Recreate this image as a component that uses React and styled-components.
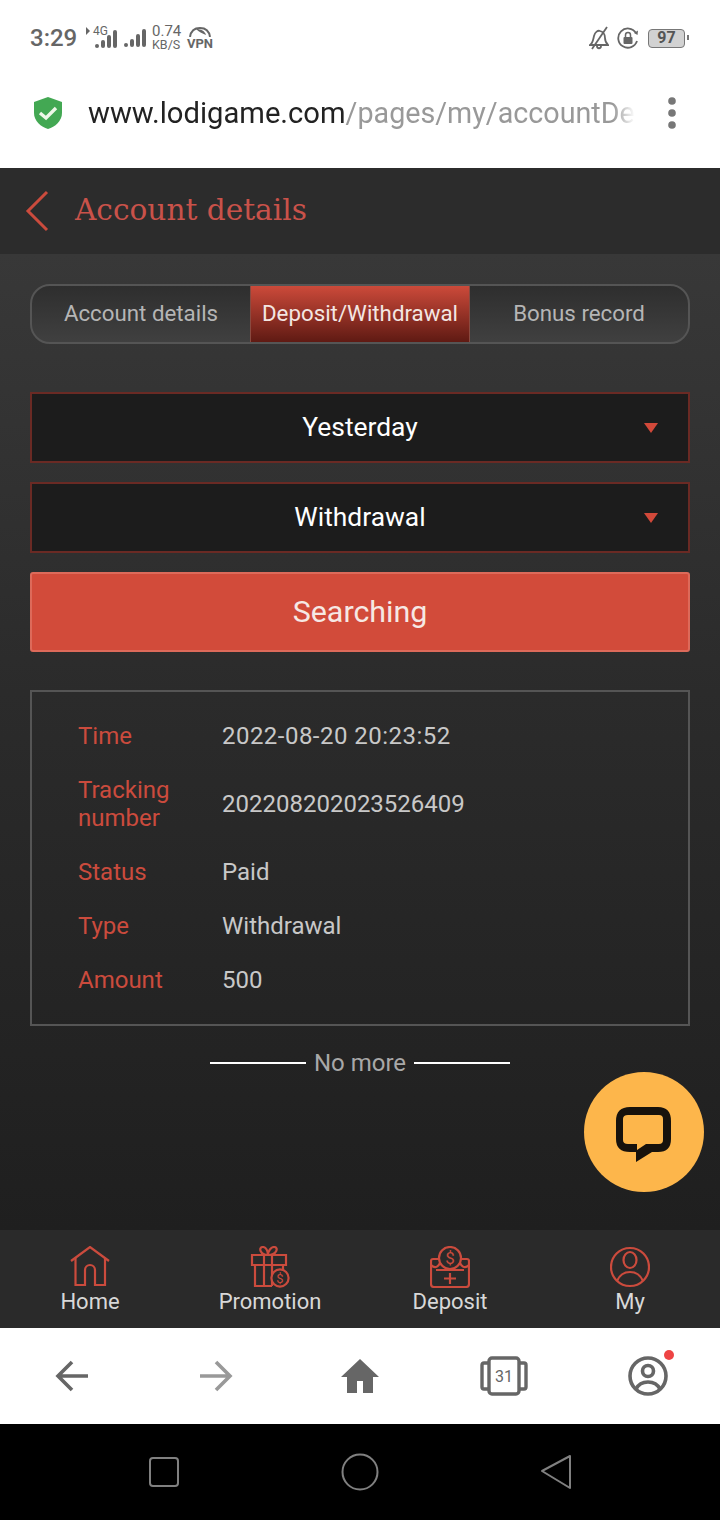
import React from 'react'
import styled, { createGlobalStyle } from 'styled-components'

const GlobalStyle = createGlobalStyle`
  html, body { margin: 0; padding: 0; background: #000; }
  * { box-sizing: border-box; }
`

const RED = '#cb4b3d'

const tabs = ['Account details', 'Deposit/Withdrawal', 'Bonus record']

const records = [
  ['Time', '2022-08-20 20:23:52'],
  ['Tracking number', '202208202023526409'],
  ['Status', 'Paid'],
  ['Type', 'Withdrawal'],
  ['Amount', '500'],
]

const Signal = () => (
  <svg width="22" height="18" viewBox="0 0 22 18" fill="#666">
    <rect x="0" y="14" width="4" height="4" rx="2" />
    <rect x="6" y="10" width="4" height="8" rx="2" />
    <rect x="12" y="5" width="4" height="13" rx="2" />
    <rect x="18" y="0" width="4" height="18" rx="2" />
  </svg>
)

const HomeIcon = () => (
  <svg width="40" height="42" viewBox="0 0 40 42" fill="none" stroke={RED} strokeWidth="2.2">
    <path d="M1 15 L20 1 L39 15" />
    <path d="M5.5 12 V39 H15 V24 a5 5 0 0 1 10 0 V39 H35 V12" />
  </svg>
)

const GiftIcon = () => (
  <svg width="40" height="42" viewBox="0 0 40 42" fill="none" stroke={RED} strokeWidth="2.2">
    <path d="M18 9 C10 9 8 1 13 1 C16 1 18 5 18 9 C18 5 21 1 24 1 C29 1 27 9 18 9" />
    <path d="M2 9 H36 V19 H2 Z" />
    <path d="M5 19 V40 H22 M33 19 V24 M14 9 V40 M22 9 V40" />
    <circle cx="30" cy="32" r="8.6" fill="#2a2a2a" />
    <text x="30" y="37" fontFamily="Roboto, sans-serif" fontSize="13" fill={RED} stroke="none" textAnchor="middle">$</text>
  </svg>
)

const DepositIcon = () => (
  <svg width="40" height="42" viewBox="0 0 40 42" fill="none" stroke={RED} strokeWidth="2.2">
    <circle cx="20" cy="12" r="11" />
    <text x="20" y="18" fontFamily="Roboto, sans-serif" fontSize="17" fill={RED} stroke="none" textAnchor="middle">$</text>
    <path d="M9 13 H3 Q1 13 1 15 V38 Q1 41 4 41 H36 Q39 41 39 38 V15 Q39 13 37 13 H31" />
    <path d="M1 19 C6 24 9 19 10 17 M39 19 C34 24 31 19 30 17 M6 24 H34" />
    <path d="M20 27 V38 M14 32.5 H26" />
  </svg>
)

const MyIcon = () => (
  <svg width="40" height="42" viewBox="0 0 40 42" fill="none" stroke={RED} strokeWidth="2.2">
    <circle cx="20" cy="21" r="19" />
    <ellipse cx="20" cy="14" rx="6.5" ry="8" />
    <path d="M7 35 C10 28 15 26 20 26 C25 26 30 28 33 35" />
  </svg>
)

const navItems = [
  ['Home', HomeIcon],
  ['Promotion', GiftIcon],
  ['Deposit', DepositIcon],
  ['My', MyIcon],
]

const App = () => (
  <Screen>
    <GlobalStyle />
    <StatusBar>
      <Clock>3:29</Clock>
      <Network>
        <svg width="4" height="8" viewBox="0 0 4 8" fill="#666">
          <path d="M0 0 L4 4 L0 8 Z" />
        </svg>
        <Small>4G</Small>
        <Signal />
      </Network>
      <Signal />
      <Speed>
        <span>0.74</span>
        <span>KB/S</span>
      </Speed>
      <Vpn>
        <svg width="24" height="10" viewBox="0 0 24 10" fill="none">
          <path d="M2 10 C3 3 8 1 12 1 C16 1 21 3 22 10" stroke="#666" strokeWidth="2" />
          <path d="M8 2 C13 2 17 4 18 8 C14 6 11 5 8 2" fill="#666" />
        </svg>
        <span>VPN</span>
      </Vpn>
      <StatusRight>
        <svg width="20" height="24" viewBox="0 0 20 24" fill="none" stroke="#666" strokeWidth="1.8">
          <path d="M1 19 C4 17 4 14 5 10 C6 6 9 4 11 5 C15 6 16 9 16 12 C16 15 17 17 19 19 Z" />
          <path d="M18 1 L3 23" />
          <path d="M8 20 C8 23 12 23 12 20" />
        </svg>
        <svg width="22" height="22" viewBox="0 0 22 22" fill="none">
          <path d="M20 14 A9.6 9.6 0 1 1 19 6" stroke="#666" strokeWidth="1.8" />
          <path d="M20.5 8 L17 6 L21 3.5 Z" fill="#666" />
          <rect x="6.5" y="10" width="9" height="7" rx="1" fill="#666" />
          <path d="M8.5 10 V8 a2.5 2.5 0 0 1 5 0 V10" stroke="#666" strokeWidth="1.5" />
        </svg>
        <Battery>97</Battery>
      </StatusRight>
    </StatusBar>

    <AddressBar>
      <svg width="28" height="32" viewBox="0 0 28 32">
        <path d="M14 0 L28 5 V16 C28 24 21 30 14 32 C7 30 0 24 0 16 V5 Z" fill="#43a853" />
        <path d="M6 16 L12 21 L22 11" fill="none" stroke="#eef7e8" strokeWidth="3.4" />
      </svg>
      <Url>
        www.lodigame.com<UrlPath>/pages/my/accountDe</UrlPath>
      </Url>
      <svg width="14" height="38" viewBox="0 0 14 38" fill="#777">
        <circle cx="7" cy="7" r="3.8" />
        <circle cx="7" cy="19" r="3.8" />
        <circle cx="7" cy="31" r="3.8" />
      </svg>
    </AddressBar>

    <AppHeader>
      <svg width="24" height="42" viewBox="0 0 24 42" fill="none" stroke={RED} strokeWidth="3">
        <path d="M22 2 L3 21 L22 40" />
      </svg>
      <Title>Account details</Title>
    </AppHeader>

    <Content>
      <Tabs>
        {tabs.map((t, i) => (
          <Tab key={t} $active={i === 1}>{t}</Tab>
        ))}
      </Tabs>

      <Select>
        <span />
        <span>Yesterday</span>
        <Caret />
      </Select>
      <Select>
        <span />
        <span>Withdrawal</span>
        <Caret />
      </Select>
      <SearchButton>Searching</SearchButton>

      <Card>
        {records.map(([k, v]) => (
          <Row key={k}>
            <Label>{k}</Label>
            <Value $date={k === 'Time'}>{v}</Value>
          </Row>
        ))}
      </Card>

      <NoMore>
        <Line />
        <span>No more</span>
        <Line />
      </NoMore>

      <ChatButton>
        <svg width="56" height="56" viewBox="0 0 56 56">
          <path
            fillRule="evenodd"
            fill="#17120c"
            d="M14 0 H42 Q55 0 55 14 V32 Q55 45 42 45 H36 L20 55 V45 H14 Q0 45 0 32 V14 Q0 0 14 0 Z
               M12 8 H43 Q47 8 47 12 V33 Q47 37 43 37 H30 L21 43 V37 H12 Q7 37 7 33 V12 Q7 8 12 8 Z"
          />
        </svg>
      </ChatButton>
    </Content>

    <BottomNav>
      {navItems.map(([name, Icon]) => (
        <NavItem key={name}>
          <Icon />
          <span>{name}</span>
        </NavItem>
      ))}
    </BottomNav>

    <BrowserBar>
      <BrowserCell>
        <svg width="34" height="32" viewBox="0 0 34 32" fill="none" stroke="#666" strokeWidth="3.6">
          <path d="M33 16 H3 M17 2 L3 16 L17 30" />
        </svg>
      </BrowserCell>
      <BrowserCell>
        <svg width="34" height="32" viewBox="0 0 34 32" fill="none" stroke="#999" strokeWidth="3.6">
          <path d="M1 16 H31 M17 2 L31 16 L17 30" />
        </svg>
      </BrowserCell>
      <BrowserCell>
        <svg width="38" height="34" viewBox="0 0 38 34" fill="#666">
          <path d="M19 0 L38 18 H32 V34 H22 V22 H16 V34 H6 V18 H0 Z" />
        </svg>
      </BrowserCell>
      <BrowserCell>
        <TabCount>
          <svg width="48" height="40" viewBox="0 0 48 40" fill="none" stroke="#666" strokeWidth="3.4">
            <rect x="9" y="2" width="30" height="36" rx="3" />
            <path d="M9 7 H4 Q2 7 2 9 V31 Q2 33 4 33 H9 M39 7 H44 Q46 7 46 9 V31 Q46 33 44 33 H39" />
          </svg>
          <TabNumber>31</TabNumber>
        </TabCount>
      </BrowserCell>
      <BrowserCell>
        <Profile>
          <svg width="40" height="40" viewBox="0 0 40 40" fill="none" stroke="#666" strokeWidth="3.6">
            <circle cx="20" cy="20" r="18" />
            <circle cx="20" cy="15" r="5.5" />
            <path d="M8 33 C11 27 16 26 20 26 C24 26 29 27 32 33" />
          </svg>
          <Dot />
        </Profile>
      </BrowserCell>
    </BrowserBar>

    <SystemNav>
      <svg width="30" height="30" viewBox="0 0 30 30" fill="none" stroke="#808080" strokeWidth="2">
        <rect x="1" y="1" width="28" height="28" rx="3" />
      </svg>
      <svg width="38" height="38" viewBox="0 0 38 38" fill="none" stroke="#808080" strokeWidth="2">
        <circle cx="19" cy="19" r="17.5" />
      </svg>
      <svg width="32" height="36" viewBox="0 0 32 36" fill="none" stroke="#808080" strokeWidth="2" strokeLinejoin="round">
        <path d="M2 17 L30 2 V34 Z" />
      </svg>
    </SystemNav>
  </Screen>
)

export default App

const Screen = styled.div`
  position: relative;
  width: 720px;
  height: 1520px;
  display: flex;
  flex-direction: column;
  overflow: hidden;
  font-family: Roboto, "Noto Sans", sans-serif;
`

const StatusBar = styled.div`
  height: 76px;
  flex: none;
  background: #fff;
  padding: 0 35px 0 30px;
  display: flex;
  align-items: center;
  color: #666;
`

const Clock = styled.div`
  font-size: 24px;
  font-weight: 500;
  width: 54px;
`

const Network = styled.div`
  width: 33px;
  height: 20px;
  margin-right: 7px;
  display: flex;
  align-items: flex-end;
  justify-content: flex-end;
  position: relative;
  svg:first-child {
    position: absolute;
    left: 2px;
    top: -1px;
  }
`

const Small = styled.span`
  position: absolute;
  left: 9px;
  top: -4px;
  font-size: 12px;
`

const Speed = styled.div`
  margin-left: 6px;
  width: 35px;
  display: flex;
  flex-direction: column;
  font-size: 13.5px;
  line-height: 13px;
  span:first-child { font-size: 15px; }
  span:last-child { font-size: 12.5px; }
`

const Vpn = styled.div`
  width: 26px;
  display: flex;
  flex-direction: column;
  align-items: center;
  font-size: 13px;
  line-height: 13px;
  font-weight: 700;
`

const StatusRight = styled.div`
  margin-left: auto;
  display: flex;
  align-items: center;
  gap: 8px;
`

const Battery = styled.div`
  position: relative;
  margin-left: 1px;
  width: 37px;
  height: 19px;
  background: #d2d2d2;
  border: 1.5px solid #777;
  border-radius: 4px;
  color: #555;
  font-size: 16px;
  font-weight: 700;
  line-height: 16px;
  text-align: center;
  &::after {
    content: '';
    position: absolute;
    right: -5px;
    top: 5px;
    width: 2px;
    height: 5px;
    background: #777;
  }
`

const AddressBar = styled.div`
  height: 92px;
  flex: none;
  background: #fff;
  padding: 0 41px 18px 34px;
  display: flex;
  align-items: center;
`

const Url = styled.div`
  margin-left: 26px;
  margin-right: auto;
  white-space: nowrap;
  font-size: 29.2px;
  color: #222;
  -webkit-mask-image: linear-gradient(to right, #000 96%, transparent 100%);
  mask-image: linear-gradient(to right, #000 96%, transparent 100%);
`

const UrlPath = styled.span`
  font-size: 28.7px;
  color: #999;
`

const AppHeader = styled.div`
  height: 86px;
  flex: none;
  background: #2c2c2c;
  padding: 0 0 2px 25px;
  display: flex;
  align-items: center;
  gap: 26px;
  svg { margin-top: 2px; }
`

const Title = styled.div`
  font-family: "DejaVu Serif", serif;
  font-size: 29.6px;
  color: #c9524a;
`

const Content = styled.div`
  position: relative;
  flex: 1;
  padding: 30px 30px 0;
  background: linear-gradient(to bottom, #383838 0%, #2b2b2b 45%, #1f1f1f 100%);
  display: flex;
  flex-direction: column;
`

const Tabs = styled.div`
  height: 60px;
  border: 2px solid #555;
  border-radius: 20px;
  display: grid;
  grid-template-columns: 218px 220px 218px;
  background: linear-gradient(to bottom, #2e2e2e, #404040);
  overflow: hidden;
  margin-bottom: 48px;
`

const Tab = styled.div`
  display: flex;
  align-items: center;
  justify-content: center;
  padding-bottom: 2px;
  font-size: 22.3px;
  color: ${p => (p.$active ? '#f3e6e2' : '#b5b5b5')};
  background: ${p => (p.$active ? 'linear-gradient(to bottom, #cc4a3a, #5f1a13)' : 'none')};
  box-shadow: ${p => (p.$active ? 'inset 1px 0 #8a4a40, inset -1px 0 #8a4a40' : 'none')};
`

const Select = styled.div`
  height: 71px;
  margin-bottom: 19px;
  background: #1c1c1c;
  border: 2px solid #6a2a24;
  display: grid;
  grid-template-columns: 1fr auto 1fr;
  align-items: center;
  font-size: 26.4px;
  color: #fff;
  padding: 0 30px 2px;
`

const Caret = styled.i`
  justify-self: end;
  margin-top: 2px;
  width: 0;
  height: 0;
  border-left: 7px solid transparent;
  border-right: 7px solid transparent;
  border-top: 10px solid #d2493a;
`

const SearchButton = styled.div`
  height: 80px;
  background: #d24b3a;
  border: 2px solid #dd6a5a;
  border-radius: 3px;
  display: flex;
  align-items: center;
  justify-content: center;
  padding-bottom: 2px;
  font-size: 30.4px;
  color: #f6e8e4;
  margin-bottom: 38px;
`

const Card = styled.div`
  border: 2px solid #555;
  padding: 17px 0 17px 46px;
`

const Row = styled.div`
  display: grid;
  grid-template-columns: 144px 1fr;
  align-items: center;
  padding: 13px 0;
  font-size: 24px;
  line-height: 28px;
`

const Label = styled.div`
  color: ${RED};
  width: 110px;
`

const Value = styled.div`
  color: #c8c8c8;
  letter-spacing: ${p => (p.$date ? '0.47px' : '0')};
`

const NoMore = styled.div`
  margin-top: 23px;
  display: flex;
  align-items: center;
  justify-content: center;
  gap: 8px;
  font-size: 24px;
  line-height: 28px;
  color: #a8a8a8;
`

const Line = styled.i`
  width: 96px;
  height: 2px;
  background: #fff;
`

const ChatButton = styled.div`
  position: absolute;
  left: 584px;
  top: 818px;
  width: 120px;
  height: 120px;
  border-radius: 50%;
  background: #fdb64b;
  display: flex;
  align-items: center;
  justify-content: center;
  padding-top: 6px;
  svg { display: block; }
`

const BottomNav = styled.div`
  height: 98px;
  flex: none;
  background: #2a2a2a;
  display: grid;
  grid-template-columns: repeat(4, 1fr);
  padding-top: 16px;
`

const NavItem = styled.div`
  display: flex;
  flex-direction: column;
  align-items: center;
  font-size: 22px;
  line-height: 28px;
  color: #d8d8d8;
  svg { display: block; }
`

const BrowserBar = styled.div`
  height: 96px;
  flex: none;
  background: #fff;
  display: grid;
  grid-template-columns: repeat(5, 144px);
`

const BrowserCell = styled.div`
  display: flex;
  align-items: center;
  justify-content: center;
`

const TabCount = styled.div`
  position: relative;
  width: 48px;
  height: 40px;
  svg { display: block; }
`

const TabNumber = styled.span`
  position: absolute;
  inset: 0;
  display: flex;
  align-items: center;
  justify-content: center;
  font-size: 16px;
  color: #666;
`

const Profile = styled.div`
  position: relative;
  width: 40px;
  height: 40px;
  svg { display: block; }
`

const Dot = styled.i`
  position: absolute;
  left: 36px;
  top: -6px;
  width: 10px;
  height: 10px;
  border-radius: 50%;
  background: #ee4444;
`

const SystemNav = styled.div`
  height: 96px;
  flex: none;
  background: #000;
  display: grid;
  grid-template-columns: repeat(3, 196px);
  justify-content: center;
  align-items: center;
  justify-items: center;
`
